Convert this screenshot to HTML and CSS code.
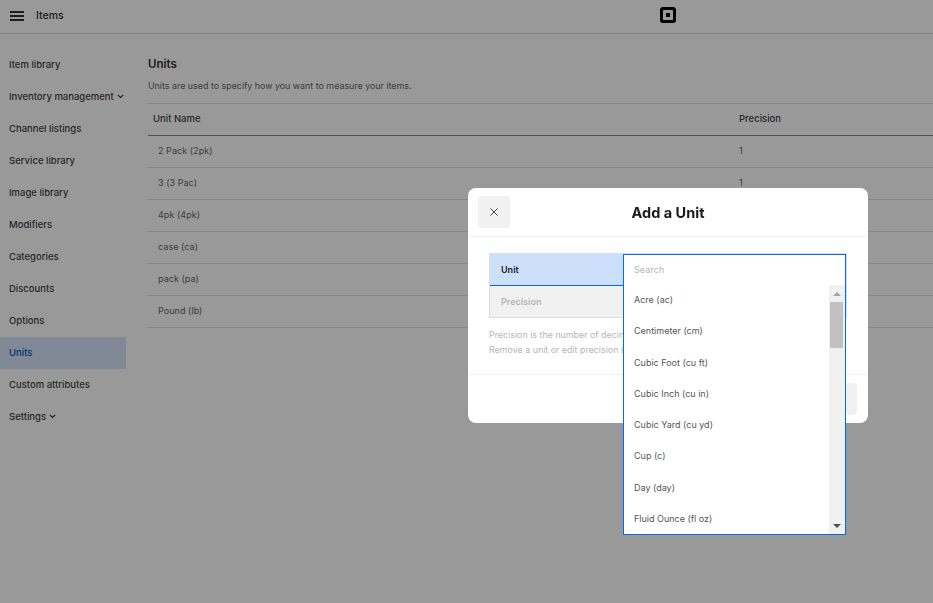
FILE: index.html
```html
<!DOCTYPE html>
<html lang="en">
<head>
    <meta charset="UTF-8">
    <meta name="viewport" content="width=device-width, initial-scale=1.0">
    <title>Units</title>
    <link rel="stylesheet" href="styles.css">
</head>
<body>
    <header class="topbar">
        <div class="topbar-left">
            <svg class="menu-icon" width="14" height="10" viewBox="0 0 14 10"><path d="M0 0h14v2H0zM0 4h14v2H0zM0 8h14v2H0z" fill="#333"/></svg>
            <span class="topbar-title">Items</span>
        </div>
        <svg class="logo" width="16" height="16" viewBox="0 0 16 16"><path fill-rule="evenodd" d="M3 0h10a3 3 0 0 1 3 3v10a3 3 0 0 1-3 3H3a3 3 0 0 1-3-3V3a3 3 0 0 1 3-3zM3.5 3a.5.5 0 0 0-.5.5v9a.5.5 0 0 0 .5.5h9a.5.5 0 0 0 .5-.5v-9a.5.5 0 0 0-.5-.5zM6 6h4v4H6z" fill="#000"/></svg>
    </header>

    <div class="layout">
        <nav class="sidebar">
            <a class="nav-item">Item library</a>
            <a class="nav-item">Inventory management <svg class="chevron" width="7" height="5" viewBox="0 0 7 5"><path d="M.8.8l2.7 2.7L6.2.8" fill="none" stroke="#333" stroke-width="1.2"/></svg></a>
            <a class="nav-item">Channel listings</a>
            <a class="nav-item">Service library</a>
            <a class="nav-item">Image library</a>
            <a class="nav-item">Modifiers</a>
            <a class="nav-item">Categories</a>
            <a class="nav-item">Discounts</a>
            <a class="nav-item">Options</a>
            <a class="nav-item active">Units</a>
            <a class="nav-item">Custom attributes</a>
            <a class="nav-item">Settings <svg class="chevron" width="7" height="5" viewBox="0 0 7 5"><path d="M.8.8l2.7 2.7L6.2.8" fill="none" stroke="#333" stroke-width="1.2"/></svg></a>
        </nav>

        <main class="content">
            <h1>Units</h1>
            <p class="intro">Units are used to specify how you want to measure your items.</p>
            <div class="table">
                <div class="row head"><span>Unit Name</span><span>Precision</span></div>
                <div class="row"><span>2 Pack (2pk)</span><span>1</span></div>
                <div class="row"><span>3 (3 Pac)</span><span>1</span></div>
                <div class="row"><span>4pk (4pk)</span><span>1</span></div>
                <div class="row"><span>case (ca)</span><span>1</span></div>
                <div class="row"><span>pack (pa)</span><span>1</span></div>
                <div class="row"><span>Pound (lb)</span><span>1</span></div>
            </div>
        </main>
    </div>

    <div class="overlay"></div>

    <div class="modal">
        <div class="modal-head">
            <button class="close-btn">
                <svg width="8" height="8" viewBox="0 0 8 8"><path d="M.5.5l7 7M7.5.5l-7 7" stroke="#333" stroke-width="0.9" fill="none"/></svg>
            </button>
            <h2>Add a Unit</h2>
        </div>
        <div class="modal-body">
            <div class="fields">
                <div class="field selected">Unit</div>
                <div class="field disabled">Precision</div>
            </div>
            <p class="hint">Precision is the number of decin<br>Remove a unit or edit precision i</p>
        </div>
        <div class="modal-foot">
            <button class="save-btn"></button>
        </div>
    </div>

    <div class="dropdown">
        <div class="search">Search</div>
        <div class="list-wrap">
            <ul class="list">
                <li>Acre (ac)</li>
                <li>Centimeter (cm)</li>
                <li>Cubic Foot (cu ft)</li>
                <li>Cubic Inch (cu in)</li>
                <li>Cubic Yard (cu yd)</li>
                <li>Cup (c)</li>
                <li>Day (day)</li>
                <li>Fluid Ounce (fl oz)</li>
            </ul>
            <div class="scrollbar">
                <div class="arrow up"></div>
                <div class="track"><div class="thumb"></div></div>
                <div class="arrow down"></div>
            </div>
        </div>
    </div>
</body>
</html>
```
FILE: styles.css
```css
* {
    box-sizing: border-box;
}

body {
    margin: 0;
    height: 100vh;
    overflow: hidden;
    background-color: #fff;
    color: #333;
    font-family: 'Inter', 'Liberation Sans', sans-serif;
    font-size: 9.5px;
}

.topbar {
    position: relative;
    height: 34px;
    display: flex;
    align-items: center;
    justify-content: center;
    border-bottom: 1px solid #d8d8d8;
}

.topbar-left {
    position: absolute;
    left: 10px;
    top: 0;
    height: 31px;
    display: flex;
    align-items: center;
    gap: 12px;
}

.topbar-title {
    font-size: 10.5px;
    font-weight: 500;
}

.logo {
    margin: -3px 0 0 403px;
}

.layout {
    display: flex;
    padding-top: 15px;
}

.sidebar {
    width: 126px;
    flex-shrink: 0;
    margin-right: 22px;
}

.nav-item {
    height: 32px;
    padding: 0 0 2px 9px;
    display: flex;
    align-items: center;
    gap: 3px;
    font-weight: 500;
    white-space: nowrap;
    color: #444;
}

.nav-item.active {
    background-color: #d5e4f9;
    color: #0a50c8;
}

.content {
    flex: 1;
}

h1 {
    margin: 0;
    font-size: 11.5px;
    font-weight: 600;
    line-height: 14px;
    padding-top: 8px;
}

.intro {
    margin: 9px 0 0;
    font-size: 8.9px;
    line-height: 12px;
    color: #666;
}

.table {
    margin-top: 11px;
    border-top: 1px solid #e2e2e2;
}

.row {
    height: 32px;
    display: grid;
    grid-template-columns: 581px 1fr;
    align-items: center;
    padding: 0 0 2px 10px;
    border-bottom: 1px solid #e2e2e2;
    color: #666;
    font-size: 9px;
    letter-spacing: 0.05px;
}

.row.head {
    grid-template-columns: 586px 1fr;
    padding-left: 5px;
    color: #444;
    font-size: 9.5px;
    font-weight: 500;
    letter-spacing: 0;
    border-bottom-color: #888;
}

.overlay {
    position: fixed;
    inset: 0;
    background: rgba(0, 0, 0, 0.4);
}

.modal {
    position: fixed;
    left: 468px;
    top: 188px;
    width: 400px;
    height: 235px;
    background-color: #fff;
    border-radius: 8px;
    display: flex;
    flex-direction: column;
}

.modal-head {
    position: relative;
    height: 49px;
    flex-shrink: 0;
    display: flex;
    align-items: center;
    justify-content: center;
    border-bottom: 1px solid #eee;
}

.modal-head h2 {
    margin: 0;
    font-size: 14.5px;
    font-weight: 700;
    color: #1a1a1a;
}

.close-btn {
    position: absolute;
    left: 10px;
    top: 8px;
    width: 32px;
    height: 32px;
    border: none;
    border-radius: 4px;
    background-color: #f1f1f1;
    display: flex;
    align-items: center;
    justify-content: center;
    padding: 0;
}

.modal-body {
    flex: 1;
    padding: 16px 21px 0;
}

.fields {
    border: 1px solid #ddd;
}

.field {
    height: 31px;
    padding-left: 11px;
    display: flex;
    align-items: center;
    font-weight: 600;
    font-size: 9px;
}

.field.selected {
    height: 32px;
    background-color: #cce0fb;
    color: #222;
    border-bottom: 1px solid #006aff;
}

.field.disabled {
    background-color: #f1f1f1;
    color: #b5b5b5;
}

.hint {
    margin: 9px 0 0;
    font-size: 8.9px;
    line-height: 15px;
    color: #b5b5b5;
    white-space: nowrap;
}

.modal-foot {
    height: 49px;
    flex-shrink: 0;
    border-top: 1px solid #eee;
    display: flex;
    justify-content: flex-end;
    align-items: center;
    padding-right: 11px;
}

.save-btn {
    width: 80px;
    height: 32px;
    border: none;
    border-radius: 4px;
    background-color: #f1f1f1;
}

.dropdown {
    position: fixed;
    left: 623px;
    top: 254px;
    width: 223px;
    height: 281px;
    background-color: #fff;
    border: 1px solid #006aff;
    display: flex;
    flex-direction: column;
}

.search {
    height: 30px;
    flex-shrink: 0;
    padding: 0 0 2px 10px;
    display: flex;
    align-items: center;
    color: #b5b5b5;
    font-size: 9px;
    letter-spacing: 0.1px;
}

.list-wrap {
    flex: 1;
    display: flex;
    min-height: 0;
}

.list {
    flex: 1;
    margin: -1px 0 0;
    padding: 0;
    list-style: none;
}

.list li {
    height: 31.25px;
    padding-left: 10px;
    display: flex;
    align-items: center;
    color: #555;
    font-size: 9px;
}

.scrollbar {
    width: 16px;
    background-color: #f1f1f1;
    display: flex;
    flex-direction: column;
}

.arrow {
    height: 17px;
    flex-shrink: 0;
    display: flex;
    align-items: center;
    justify-content: center;
}

.arrow.up::before {
    content: "";
    border-left: 4px solid transparent;
    border-right: 4px solid transparent;
    border-bottom: 4px solid #a3a3a3;
}

.arrow.down::before {
    content: "";
    border-left: 4px solid transparent;
    border-right: 4px solid transparent;
    border-top: 4px solid #505050;
}

.track {
    flex: 1;
}

.thumb {
    width: 13px;
    height: 46px;
    margin-left: 1px;
    background-color: #c1c1c1;
}
```
